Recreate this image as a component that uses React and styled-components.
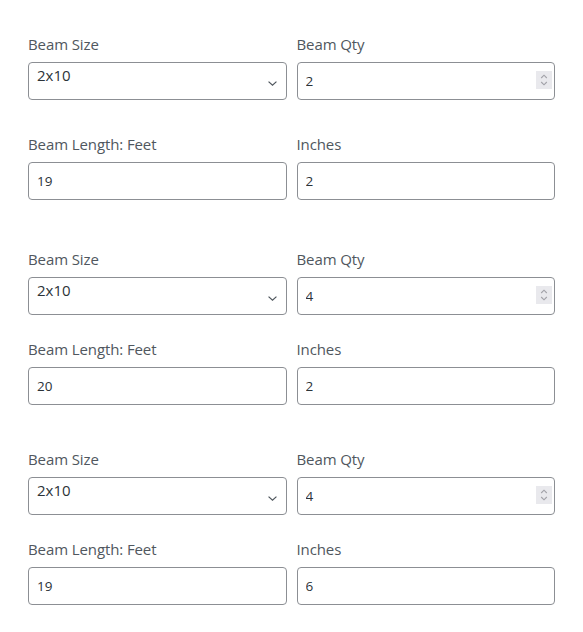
import styled, { createGlobalStyle } from "styled-components";

const GlobalStyle = createGlobalStyle`
  html, body {
    margin: 0;
    padding: 0;
    background: #fff;
  }
  body {
    font-family: "Open Sans", "Noto Sans", "Liberation Sans", sans-serif;
  }
`;

const Page = styled("div")`
  width: 583px;
  box-sizing: border-box;
  padding: 33px 28px 0;
`;

const BeamBlock = styled("section")`
  display: grid;
  grid-template-columns: 1fr 1fr;
  column-gap: 10px;
  row-gap: ${(p) => (p.$roomy ? "33px" : "23px")};
  margin-bottom: ${(p) => (p.$roomy ? "48px" : "43px")};
`;

const Field = styled("div")`
  display: flex;
  flex-direction: column;
  gap: 7px;
`;

const Label = styled("label")`
  font-size: 15px;
  line-height: 22px;
  color: #50575e;
  letter-spacing: -0.1px;
`;

const boxStyle = `
  box-sizing: border-box;
  width: 100%;
  height: 38px;
  border: 1px solid #8c8f94;
  border-radius: 4px;
  background: #fff;
  color: #2c3338;
  outline: none;
  margin: 0;
  font-family: "Open Sans", "Noto Sans", "Liberation Sans", sans-serif;
`;

const SizeSelect = styled("select")`
  ${boxStyle}
  appearance: none;
  -webkit-appearance: none;
  font-size: 15px;
  line-height: 20px;
  padding: 0 28px 12px 8px;
  background-image: url("data:image/svg+xml;utf8,<svg xmlns='http://www.w3.org/2000/svg' width='12' height='8' viewBox='0 0 12 8'><path d='M1.5 1.8 L6 6 L10.5 1.8' fill='none' stroke='%2350575e' stroke-width='1.4'/></svg>");
  background-repeat: no-repeat;
  background-position: right 8px top 17px;
  background-size: 11px 7px;
`;

const InputWrap = styled("div")`
  position: relative;
`;

const TextInput = styled("input")`
  ${boxStyle}
  font-size: 13.5px;
  padding: 0 8px;
`;

const Spinner = styled("span")`
  position: absolute;
  top: 9px;
  right: 3px;
  width: 16px;
  height: 18px;
  background: #e9e9ed;
  display: flex;
  align-items: center;
  justify-content: center;
  pointer-events: none;
`;

function SpinArrows() {
  return (
    <Spinner>
      <svg width="10" height="14" viewBox="0 0 10 14">
        <path d="M2.2 5 L5 2.2 L7.8 5" fill="none" stroke="#a2a2a8" strokeWidth="1.1" />
        <path d="M2.2 9 L5 11.8 L7.8 9" fill="none" stroke="#a2a2a8" strokeWidth="1.1" />
      </svg>
    </Spinner>
  );
}

const beams = [
  { size: "2x10", qty: "2", feet: "19", inches: "2" },
  { size: "2x10", qty: "4", feet: "20", inches: "2" },
  { size: "2x10", qty: "4", feet: "19", inches: "6" },
];

function Beam({ beam, index }) {
  return (
    <BeamBlock $roomy={index === 0}>
      <Field>
        <Label>Beam Size</Label>
        <SizeSelect defaultValue={beam.size}>
          <option>2x6</option>
          <option>2x8</option>
          <option>2x10</option>
          <option>2x12</option>
        </SizeSelect>
      </Field>
      <Field>
        <Label>Beam Qty</Label>
        <InputWrap>
          <TextInput type="text" defaultValue={beam.qty} />
          <SpinArrows />
        </InputWrap>
      </Field>
      <Field>
        <Label>Beam Length: Feet</Label>
        <TextInput type="text" defaultValue={beam.feet} />
      </Field>
      <Field>
        <Label>Inches</Label>
        <TextInput type="text" defaultValue={beam.inches} />
      </Field>
    </BeamBlock>
  );
}

const App = () => {
  return (
    <>
      <GlobalStyle />
      <Page>
        {beams.map((b, i) => (
          <Beam key={i} beam={b} index={i} />
        ))}
      </Page>
    </>
  );
};

export default App;
